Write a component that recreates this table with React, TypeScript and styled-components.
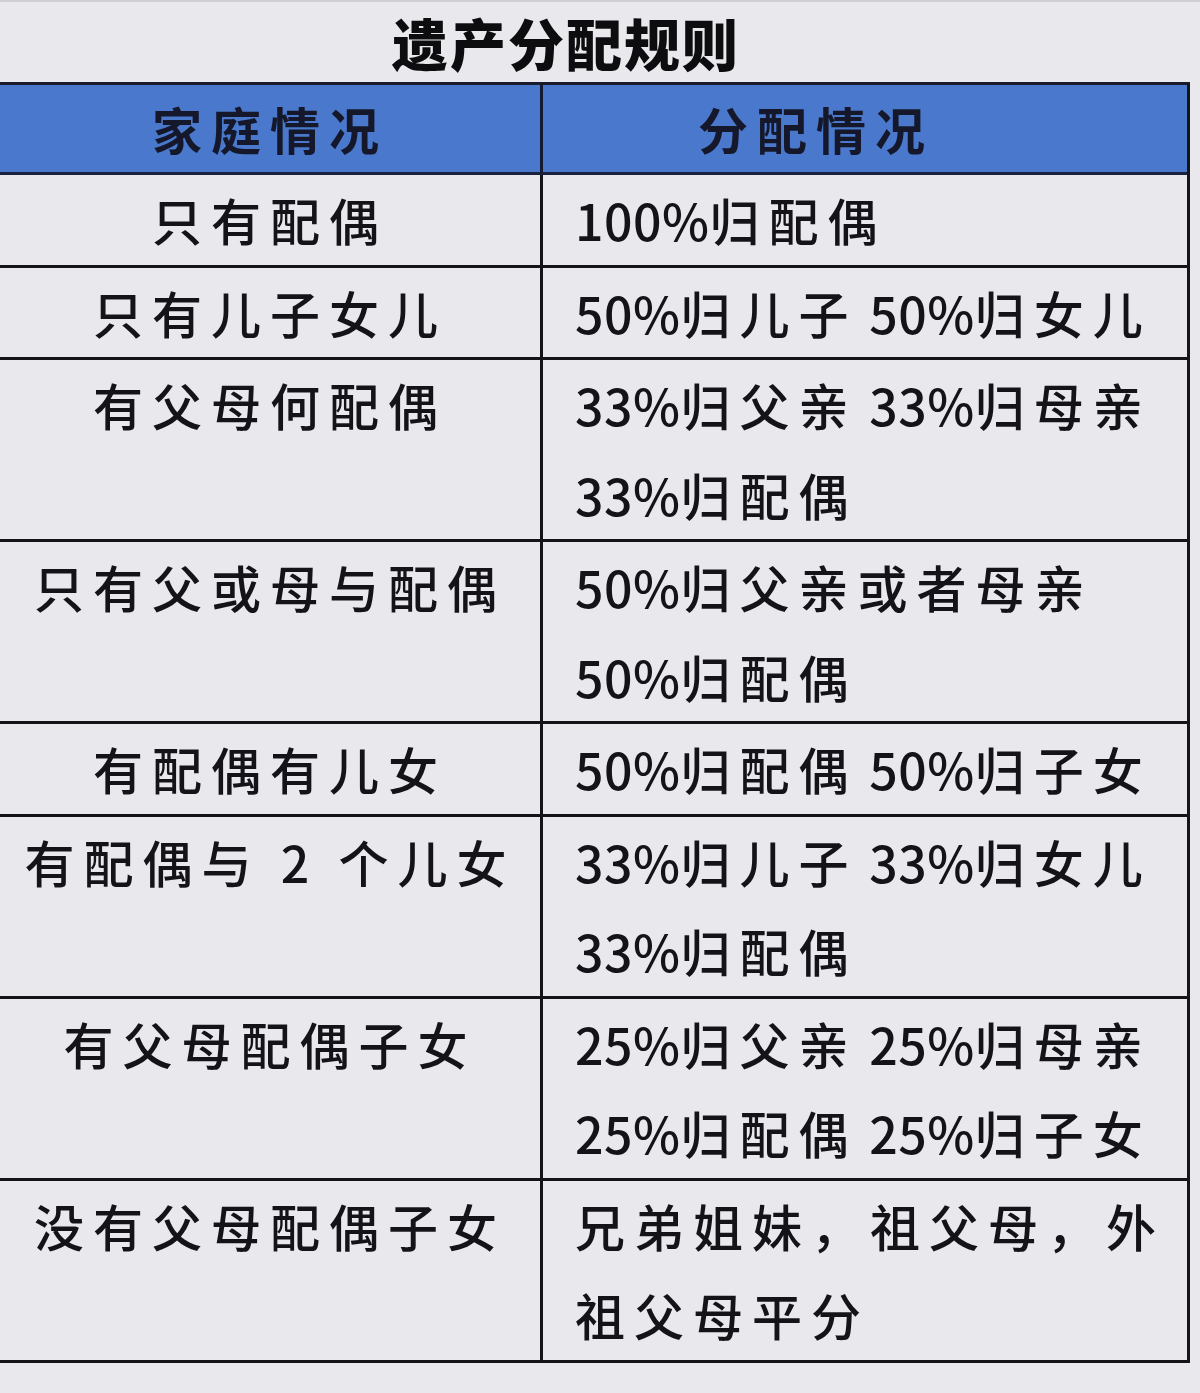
import styled, { createGlobalStyle } from "styled-components";

type Rule = {
	family: string;
	shares: string[];
};

const rules: Rule[] = [
	{ family: "只有配偶", shares: [ "100%归配偶" ] },
	{ family: "只有儿子女儿", shares: [ "50%归儿子 50%归女儿" ] },
	{ family: "有父母何配偶", shares: [ "33%归父亲 33%归母亲", "33%归配偶" ] },
	{ family: "只有父或母与配偶", shares: [ "50%归父亲或者母亲", "50%归配偶" ] },
	{ family: "有配偶有儿女", shares: [ "50%归配偶 50%归子女" ] },
	{ family: "有配偶与 2 个儿女", shares: [ "33%归儿子 33%归女儿", "33%归配偶" ] },
	{ family: "有父母配偶子女", shares: [ "25%归父亲 25%归母亲", "25%归配偶 25%归子女" ] },
	{ family: "没有父母配偶子女", shares: [ "兄弟姐妹，祖父母，外", "祖父母平分" ] }
];

const GlobalStyle = createGlobalStyle`
    body{
        margin:0;
        background:#e9e9ed;
        font-family:"Noto Sans CJK SC", "Noto Sans", sans-serif;
        color:#141418;
    }
`;

const Page = styled.div`
    width:1200px;
    min-height:1393px;
    box-sizing:border-box;
    border-top:2px solid #cfcfd4;
`;

const Title = styled.h1`
    margin:0;
    line-height:80px;
    padding-right:68px;
    text-align:center;
    font-size:56px;
    font-weight:900;
    letter-spacing:2px;
    color:#0d0d10;
`;

const Table = styled.div`
    width:1190px;
    display:grid;
    grid-template-columns:540px 1fr;
    border-top:3px solid #1a1c2e;
    border-right:3px solid #15151c;
    box-sizing:border-box;
`;

const HeadCell = styled.div<{ $right?: boolean }>`
    background:#4978cc;
    height:87px;
    line-height:87px;
    font-size:50px;
    font-weight:700;
    letter-spacing:9px;
    color:#15182a;
    border-bottom:3px solid #1b2240;
    border-left:${props => props.$right ? "3px solid #141a30" : "none"};
    text-align:${props => props.$right ? "left" : "center"};
    padding-left:${props => props.$right ? "155px" : "0"};
`;

const Cell = styled.div<{ $right?: boolean }>`
    line-height:89.5px;
    font-size:50px;
    font-weight:500;
    letter-spacing:9px;
    border-bottom:3px solid #141418;
    border-left:${props => props.$right ? "3px solid #141418" : "none"};
    text-align:${props => props.$right ? "left" : "center"};
    padding-left:${props => props.$right ? "32px" : "0"};
    white-space:nowrap;
`;

const Line = styled.div`
    height:89.5px;
`;

const Num = styled.span`
    letter-spacing:0.5px;
`;

function renderShare(share:string) {
	return share.split(/(\s?[\d%]+)/).filter(part => part).map((part, index) => {
		return /[\d%]/.test(part) ? <Num key={index}>{part}</Num> : <span key={index}>{part}</span>;
	});
}

function App() {
	return (
		<Page>
			<GlobalStyle />
			<Title>遗产分配规则</Title>
			<Table>
				<HeadCell>家庭情况</HeadCell>
				<HeadCell $right>分配情况</HeadCell>
				{rules.map(rule => {
					return [
						<Cell key={rule.family + "-l"}>
							<Line>{rule.family}</Line>
						</Cell>,
						<Cell $right key={rule.family + "-r"}>
							{rule.shares.map((share, index) => {
								return <Line key={index}>{renderShare(share)}</Line>;
							})}
						</Cell>
					];
				})}
			</Table>
		</Page>
	);
}

export default App;
